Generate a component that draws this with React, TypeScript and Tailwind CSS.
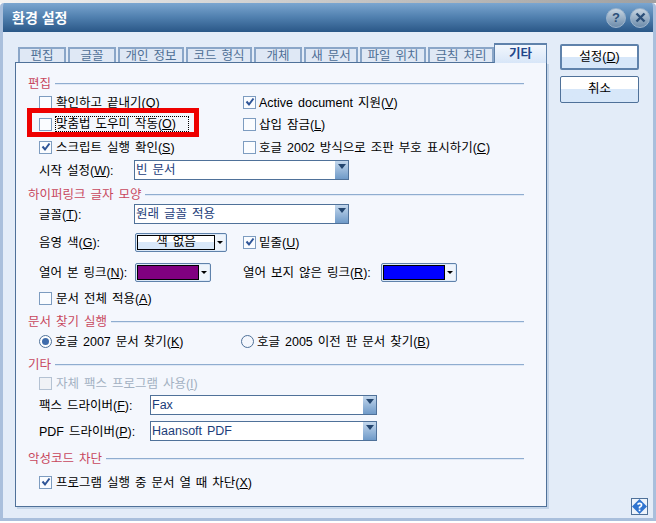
import React from 'react'

const font = 'font-["Liberation_Sans","Noto_Sans_CJK_KR",sans-serif]'

const tabs = [
  { label: '편집', w: 'w-[48px]' },
  { label: '글꼴', w: 'w-[48px]' },
  { label: '개인 정보', w: 'w-[66px]' },
  { label: '코드 형식', w: 'w-[66px]' },
  { label: '개체', w: 'w-[48px]' },
  { label: '새 문서', w: 'w-[54px]' },
  { label: '파일 위치', w: 'w-[66px]' },
  { label: '금칙 처리', w: 'w-[66px]' },
]

const Mn = ({ c }: { c: string }) => <span className="underline">{c}</span>

// hangul sits a little high in its line box, so nudge it down
const Label = ({ children, className }: { children: React.ReactNode; className?: string }) => (
  <span className={`pt-[2px] ${className ?? ''}`}>{children}</span>
)

const Check = ({ checked, disabled }: { checked?: boolean; disabled?: boolean }) => (
  <span
    className={`flex h-[13px] w-[13px] shrink-0 items-center justify-center border-[1.5px] ${
      disabled ? 'border-[#b4c2d3] bg-[#f0f2f6]' : 'border-[#7d9cc0] bg-[#fafcff]'
    }`}
  >
    {checked && (
      <svg width="10" height="10" viewBox="0 0 10 10" fill="none" stroke="#2f5597" strokeWidth="2">
        <path d="M1.5 4.5 4 7.5 8.5 1.5" />
      </svg>
    )}
  </span>
)

const Heading = ({ text, className }: { text: string; className?: string }) => (
  <div className={`ml-[12px] flex h-[16px] items-center gap-[4px] ${className ?? ''}`}>
    <Label className="text-[#c8475e]">{text}</Label>
    <span className="h-px flex-1 bg-[#8fadd0] shadow-[0_1px_0_#dfe8f5]" />
  </div>
)

const Combo = ({ value, w }: { value: string; w: string }) => (
  <div className={`flex h-[20px] items-stretch border-[1.5px] border-[#4f7199] bg-white ${w}`}>
    <span className="flex-1 truncate pl-[1px] leading-[19px] text-[#1c3d7a]">{value}</span>
    <span className="flex w-[13px] justify-center bg-gradient-to-b from-[#c3d7ec] to-[#6f9ac8] pt-[3px]">
      <span className="h-0 w-0 border-x-[4px] border-t-[5px] border-x-transparent border-t-[#24466f]" />
    </span>
  </div>
)

const ColorPick = ({ color }: { color: string }) => (
  <div className="flex h-[19px] w-[76px] items-stretch rounded-[2px] border-[1.5px] border-[#5f82ab] bg-[#dbe8f7] p-px">
    <span className="flex-1 border border-black" style={{ background: color }} />
    <span className="flex w-[10px] items-center justify-center bg-[#eef4fb]">
      <span className="h-0 w-0 border-x-[3px] border-t-[3px] border-x-transparent border-t-black" />
    </span>
  </div>
)

export default function App() {
  return (
    <div className={`relative h-[523px] w-[656px] overflow-hidden bg-white text-[12.5px] leading-none whitespace-nowrap text-black [word-spacing:1.5px] ${font}`}>
      <div className="h-[3px] bg-gradient-to-r from-[#f2f2f2] to-[#a0a0a0]" />
      <div className="flex h-[518px] flex-col overflow-hidden rounded-t-[4px] border-x-[3px] border-b-[3px] border-x-[#a9bfdc] border-b-[#a9bfdc] bg-[#e3ecf8]">
        {/* title bar */}
        <div className="-mx-[3px] flex h-[29px] shrink-0 items-center justify-between bg-gradient-to-b from-[#7ba6d0] via-[#4f7fae] to-[#2a5787] pl-[12px] pr-[6px]">
          <span className="text-[14px] font-bold text-white [word-spacing:0]">환경 설정</span>
          <div className="flex items-center gap-[4px]">
            <span className="flex h-[20px] w-[20px] items-center justify-center rounded-full border border-[#9db4cc] bg-gradient-to-b from-[#c9d6e2] to-[#6d8cab] text-[13px] font-bold text-[#2c4f78]">?</span>
            <span className="flex h-[20px] w-[20px] items-center justify-center rounded-full border border-[#9db4cc] bg-gradient-to-b from-[#c9d6e2] to-[#6d8cab]">
              <svg width="11" height="11" viewBox="0 0 11 11" stroke="#2c4f78" strokeWidth="2.4">
                <path d="M1.5 1.5l8 8M9.5 1.5l-8 8" />
              </svg>
            </span>
          </div>
        </div>

        <div className="flex flex-1 pl-[12px]">
          {/* tabs + panel */}
          <div className="mt-[11px] flex w-[532px] shrink-0 flex-col">
            <div className="flex h-[19px] items-end gap-[2px] pl-[3px]">
              {tabs.map((t) => (
                <span
                  key={t.label}
                  className={`flex h-[15px] items-center justify-center border-x-2 border-t-2 border-[#8aa6c8] bg-[#dfe8f5] pt-[1px] text-[#4e6f96] ${t.w}`}
                >
                  {t.label}
                </span>
              ))}
              <span className="z-10 -mb-px -ml-[2px] flex h-[20px] w-[53px] items-center justify-center border-x border-t-2 border-[#5f82ab] bg-gradient-to-b from-[#f2f7fd] to-[#d8e6f8] font-bold text-[#22468a]">
                기타
              </span>
            </div>
            <div className="h-[445px] border border-[#4f7199] bg-[#f4f7fd] pr-[22px] pt-[12px] shadow-[2px_2px_0_#c3d4e8]">
              <Heading text="편집" />
              <div className="ml-[23px] mt-[1px] flex h-[20px] items-center">
                <div className="flex w-[204px] items-center gap-[4px]"><Check /><Label>확인하고 끝내기(<Mn c="Q" />)</Label></div>
                <div className="flex items-center gap-[3px]"><Check checked /><Label>Active document 지원(<Mn c="V" />)</Label></div>
              </div>
              <div className="ml-[23px] mt-[2px] flex h-[20px] items-center">
                <div className="flex w-[204px] items-center gap-[3px]">
                  <Check />
                  <span className="flex h-[16px] w-[134px] items-center border border-dotted border-black pt-[1px]">맞춤법 도우미 작동(<Mn c="O" />)</span>
                </div>
                <div className="flex items-center gap-[3px]"><Check /><Label>삽입 잠금(<Mn c="L" />)</Label></div>
              </div>
              <div className="ml-[23px] mt-[3px] flex h-[20px] items-center">
                <div className="flex w-[204px] items-center gap-[4px]"><Check checked /><Label>스크립트 실행 확인(<Mn c="S" />)</Label></div>
                <div className="flex items-center gap-[3px]"><Check /><Label>호글 2002 방식으로 조판 부호 표시하기(<Mn c="C" />)</Label></div>
              </div>
              <div className="ml-[23px] mt-[3px] flex h-[20px] items-center">
                <Label className="w-[95px]">시작 설정(<Mn c="W" />):</Label>
                <Combo value="빈 문서" w="w-[215px]" />
              </div>

              <Heading text="하이퍼링크 글자 모양" className="mt-[6px]" />
              <div className="ml-[23px] mt-[2px] flex h-[20px] items-center">
                <Label className="w-[95px]">글꼴(<Mn c="T" />):</Label>
                <Combo value="원래 글꼴 적용" w="w-[215px]" />
              </div>
              <div className="ml-[23px] mt-[8px] flex h-[20px] items-center">
                <Label className="w-[96px]">음영 색(<Mn c="G" />):</Label>
                <div className="flex h-[19px] w-[92px] items-stretch rounded-[2px] border-[1.5px] border-[#5f82ab] bg-[#dbe8f7] p-px">
                  <span className="flex flex-1 items-center justify-center border border-black bg-gradient-to-b from-white from-50% to-[#d9e8f9] to-50% pt-[1px]">색 없음</span>
                  <span className="flex w-[10px] items-center justify-center bg-[#eef4fb]">
                    <span className="h-0 w-0 border-x-[3px] border-t-[3px] border-x-transparent border-t-black" />
                  </span>
                </div>
                <div className="ml-[16px] flex items-center gap-[3px]"><Check checked /><Label>밑줄(<Mn c="U" />)</Label></div>
              </div>
              <div className="ml-[23px] mt-[10px] flex h-[20px] items-center">
                <Label className="w-[96px]">열어 본 링크(<Mn c="N" />):</Label>
                <ColorPick color="#800080" />
                <Label className="ml-[32px] w-[138px]">열어 보지 않은 링크(<Mn c="R" />):</Label>
                <ColorPick color="#0000ff" />
              </div>
              <div className="ml-[23px] mt-[6px] flex h-[20px] items-center gap-[4px]">
                <Check /><Label>문서 전체 적용(<Mn c="A" />)</Label>
              </div>

              <Heading text="문서 찾기 실행" className="mt-[5px]" />
              <div className="ml-[23px] mt-[2px] flex h-[20px] items-center">
                <div className="flex w-[202px] items-center gap-[3px]">
                  <span className="flex h-[13px] w-[13px] items-center justify-center rounded-full border border-[#4f7199] bg-white">
                    <span className="h-[7px] w-[7px] rounded-full bg-[#3f6cab]" />
                  </span>
                  <Label>호글 2007 문서 찾기(<Mn c="K" />)</Label>
                </div>
                <div className="flex items-center gap-[3px]">
                  <span className="h-[13px] w-[13px] rounded-full border border-[#4f7199] bg-[#f4f7fd]" />
                  <Label>호글 2005 이전 판 문서 찾기(<Mn c="B" />)</Label>
                </div>
              </div>

              <Heading text="기타" className="mt-[5px]" />
              <div className="ml-[23px] mt-[1px] flex h-[20px] items-center gap-[4px]">
                <Check disabled /><Label className="text-[#a3b1c2]">자체 팩스 프로그램 사용(<Mn c="I" />)</Label>
              </div>
              <div className="ml-[23px] mt-[2px] flex h-[20px] items-center">
                <Label className="w-[111px]">팩스 드라이버(<Mn c="F" />):</Label>
                <Combo value="Fax" w="w-[227px]" />
              </div>
              <div className="ml-[23px] mt-[6px] flex h-[20px] items-center">
                <Label className="w-[111px]">PDF 드라이버(<Mn c="P" />):</Label>
                <Combo value="Haansoft PDF" w="w-[227px]" />
              </div>

              <Heading text="악성코드 차단" className="mt-[9px]" />
              <div className="ml-[23px] mt-[6px] flex h-[20px] items-center gap-[4px]">
                <Check checked /><Label>프로그램 실행 중 문서 열 때 차단(<Mn c="X" />)</Label>
              </div>
            </div>
          </div>

          {/* right buttons */}
          <div className="ml-[13px] flex flex-1 flex-col pr-[5px] pt-[12px]">
            <button className="h-[26px] w-[79px] rounded-[2px] border-2 border-[#5f82ab] bg-gradient-to-b from-white from-50% to-[#d7e7f9] to-50%">
              설정(<Mn c="D" />)
            </button>
            <button className="mt-[6px] h-[27px] w-[79px] rounded-[2px] border border-[#4f7199] bg-gradient-to-b from-white from-50% to-[#d7e7f9] to-50%">
              취소
            </button>
            <span className="ml-auto mb-[3px] mt-auto flex h-[17px] w-[17px] items-center justify-center border border-[#4f7199] bg-[#eef4fb]">
              <svg width="15" height="15" viewBox="0 0 15 15">
                <path d="M7.5 0 15 7.5 7.5 15 0 7.5z" fill="#2f74d0" />
                <path d="M5.5 5.5Q7.5 3.5 9.5 5.2 10 7 7.5 8.3V9.5" fill="none" stroke="#fff" strokeWidth="1.6" />
                <rect x="6.7" y="10.5" width="1.7" height="1.7" fill="#fff" />
              </svg>
            </span>
          </div>
        </div>
      </div>

      {/* annotation over the screenshot */}
      <div className="absolute left-[27px] top-[108px] h-[29px] w-[172px] border-[5px] border-[#ee0000]" />
    </div>
  )
}
